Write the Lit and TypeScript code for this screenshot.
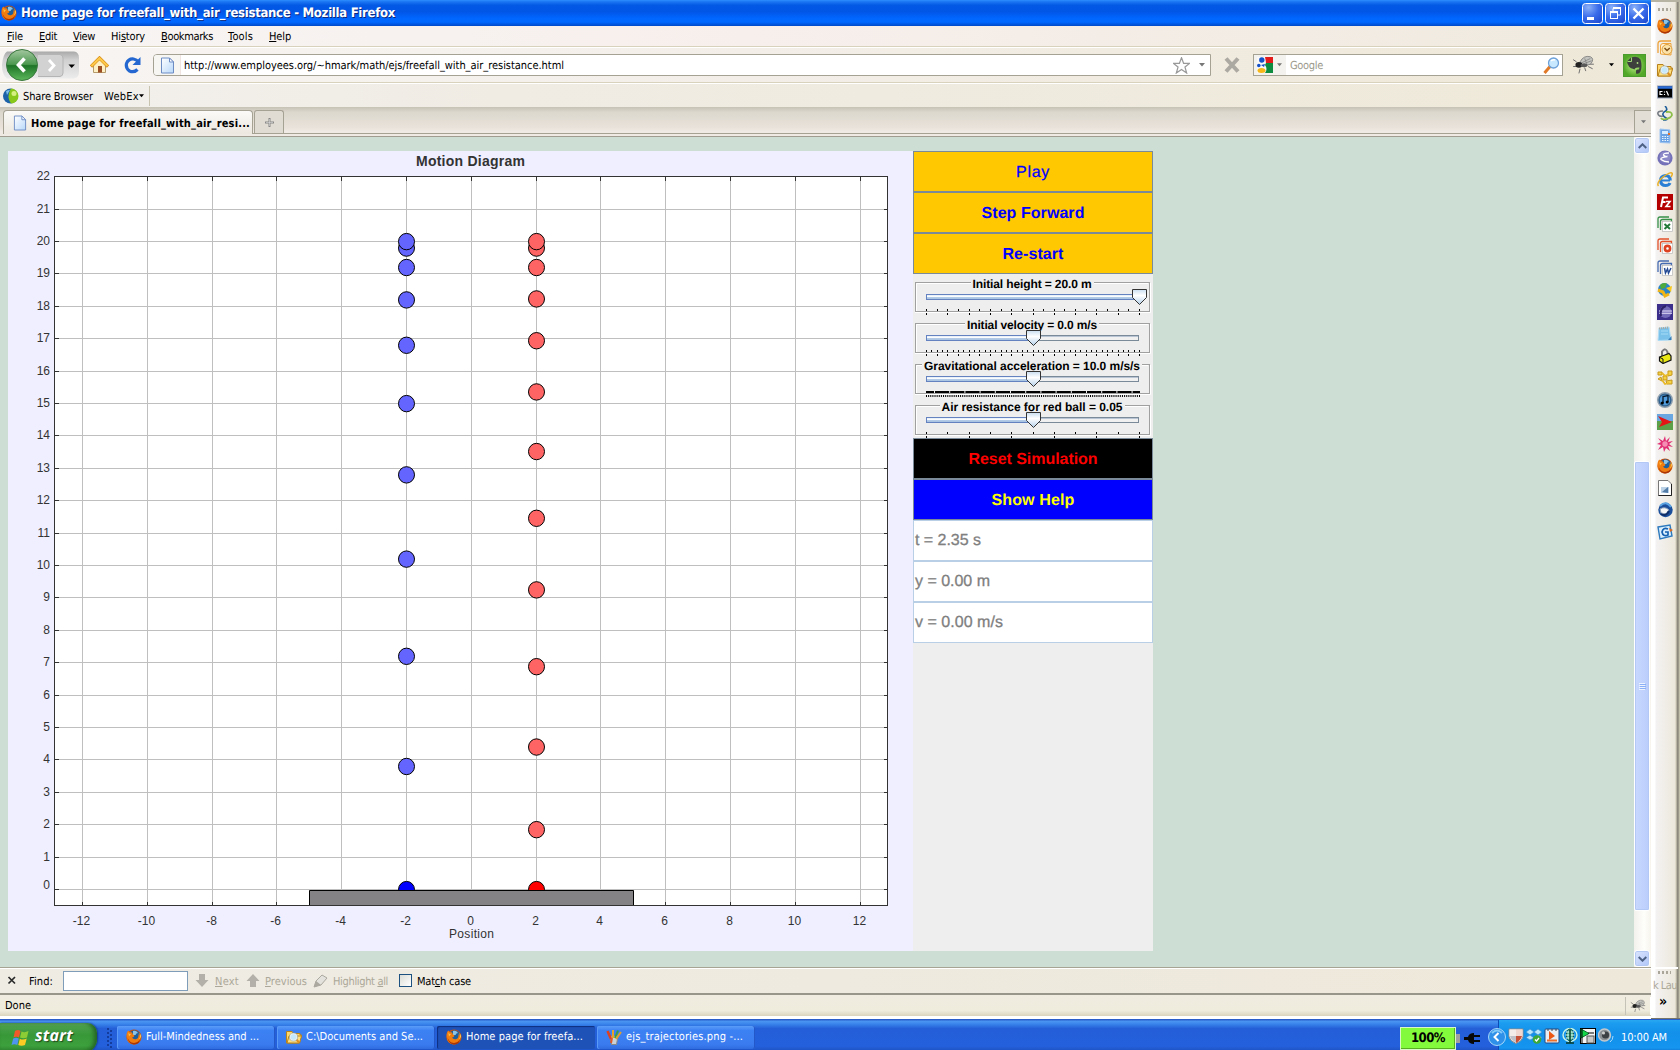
import { LitElement, html, svg, css } from "lit";
import { customElement } from "lit/decorators.js";

const UI = css`
  :host { font-family: "DejaVu Sans Condensed", "DejaVu Sans", sans-serif; font-stretch: condensed; font-size: 11px; color: #000; }
  * { box-sizing: border-box; }
  svg { display: block; flex: none; }
  .fit { display: inline-block; white-space: pre; flex: none; text-rendering: geometricPrecision; }
`;

/** Text whose tracking is adjusted so that it takes up the given width. */
const fit = (content: unknown, width: number) => html`<span class="fit" data-w=${width}>${content}</span>`;

class FitElement extends LitElement {
  firstUpdated() {
    this.renderRoot.querySelectorAll<HTMLElement>(".fit").forEach((el) => {
      const target = Number(el.dataset.w);
      const n = (el.textContent ?? "").length;
      const natural = el.getBoundingClientRect().width;
      el.style.letterSpacing = `${(target - natural) / n}px`;
    });
  }
}

const icon = (body: unknown, w = 16, h = 16, vb = "0 0 16 16") =>
  html`<svg width=${w} height=${h} viewBox=${vb}>${body}</svg>`;

const firefox = svg`
  <circle cx="8" cy="8" r="7.6" fill="#c9500c"/>
  <circle cx="8.6" cy="6.6" r="5.4" fill="#1c5f9e"/>
  <path d="M7 2Q10 1 12 4Q10 4 9.500 6L7 6Z" fill="#8cc4e8"/>
  <path d="M.6 5Q1 2 2.500 1.400Q3 3 4.500 3.200Q7 3 6.500 5L8.500 6.500Q8 8.500 6 8.500Q7.500 11 10.500 10Q13 9 12.600 4.500Q16 8 13.500 12.500Q10 16.500 5 14.800Q0 12 .6 5Z" fill="#f07c10"/>
  <path d="M1.500 8Q2.500 13.500 8 14Q12.500 13.600 14 10Q14 15 8 15.600Q2 14.500 1.500 8Z" fill="#a83408"/>
  <path d="M13.200 4Q15 7 13 10.500Q14.800 9 14.900 7Q14.600 5 13.200 4Z" fill="#ffe060"/>
  <path d="M2.300 3.500Q3 5 5 5L3 7.500Z" fill="#ffc440"/>`;
const folderFind = svg`
  <path d="M.5 2.500H6L7.500 4.500H14V6H15.500L13.500 14H.5Z" fill="#ffd76a" stroke="#b8831c"/>
  <path d="M3 7H15.500L13.500 14H1Z" fill="#ffe080" stroke="#b8831c"/>
  <path d="M10 10L13 13.500" stroke="#e09020" stroke-width="2"/><circle cx="7.500" cy="8" r="3.400" fill="#c4e8fc" stroke="#e8f0f4" stroke-width="1.200"/><circle cx="7.500" cy="8" r="4.100" fill="none" stroke="#7f98a8" stroke-width=".5"/>`;
const page = svg`<path d="M1.500 .5H9.500L13.500 4.500V15.500H1.500Z" fill="url(#pg)" stroke="#6d8cc4"/><path d="M9.500 .5V4.500H13.500Z" fill="#fff" stroke="#6d8cc4"/>
  <defs><linearGradient id="pg" x2="1" y2="1"><stop stop-color="#fff"/><stop offset="1" stop-color="#b8d8fa"/></linearGradient></defs>`;
const fly = svg`
  <path d="M4 6L1 4M5 10L1 10M7 12L6 16M11 11L12 14M14 10L18 12M15 8L19 8" stroke="#666" stroke-width=".8"/>
  <path d="M7 6Q10 0 16 1.500Q20 3.500 16 8L9 10Z" fill="#c4c4c0" stroke="#777" stroke-width=".7"/>
  <path d="M8 7L16 3M9 8L17 5M11 3L13 8" stroke="#777" stroke-width=".6"/>
  <ellipse cx="6" cy="8.500" rx="3" ry="2.500" fill="#222"/><ellipse cx="10.500" cy="9" rx="3" ry="1.700" fill="#585858"/>`;

const office = (color: string, mark: unknown) => svg`
  <path d="M1 12V3Q1 1 3 1H12" fill="none" stroke=${color} stroke-width="1.300"/><path d="M3.500 14V5.500Q3.500 3.500 5.500 3.500H14.500V6" fill="none" stroke=${color} stroke-width="1.300"/>
  <rect x="5.500" y="5.500" width="10" height="10" fill="#fff" stroke="#b8b8b8" stroke-width=".7"/>${mark}`;

const launchers: unknown[] = [
  firefox,
  svg`<path d="M1 13V4Q1 1 4 1H14" fill="none" stroke="#eda33a" stroke-width="1.300"/><path d="M3.500 14V6Q3.500 3.500 6 3.500H14V15Z" fill="#fff3d8" stroke="#eda33a"/><circle cx="10" cy="9.500" r="5" fill="#fbe2a8" stroke="#dd9d37"/><path d="M7.500 8L10 10.500L12.800 8" fill="none" stroke="#7b4c12" stroke-width="1.400"/>`,
  folderFind,
  svg`<rect x=".5" y="2" width="15" height="12" fill="#000" stroke="#98a4b8"/><path d="M1 3.500H15" stroke="#2a6cd8" stroke-width="2.500"/><path d="M5.500 7.500H3V10.500H5.500M7.500 7.500V8.500M7.500 10V11M9.500 7L11.500 11.500" fill="none" stroke="#fff" stroke-width="1.200"/>`,
  svg`<path d="M8 0Q12 4 7 6Q4 9 9 12Q12 14 6 14" fill="none" stroke="#1c5c98" stroke-width="1.600"/><path d="M6 5Q0 5 1 8Q2 11 6 10" fill="none" stroke="#777d84" stroke-width="1.600"/><path d="M9 6Q15 5 15 9Q14 12 9 13Q5 14 4 12" fill="none" stroke="#8cbd48" stroke-width="1.800"/>`,
  svg`<path d="M3 1L13 2V15L3 14.500Z" fill="#6ba2e4" stroke="#9cc4f0"/><rect x="5" y="3" width="6" height="3" fill="#d8ecff"/><rect x="11" y="5" width="2" height="2" fill="#e87020"/><path d="M5 8.500H12M5 10.500H12M5 12.500H12" stroke="#e8f4ff" stroke-dasharray="1.500 1"/>`,
  svg`<circle cx="8" cy="8" r="7.600" fill="#7471b8"/><circle cx="8" cy="7" r="5.500" fill="#8c89c8"/><path d="M12 3Q6 3 6.500 5Q8 7 10.500 6.500Q3 7.500 4 9.500Q7 12 12 12" fill="none" stroke="#fff" stroke-width="1.300"/>`,
  svg`<path d="M13 8.500H4.500" stroke="#2b80d5" stroke-width="2"/><path d="M13.300 8.500Q13 3.500 8.500 3.500Q3.500 4 3.500 8.500Q4 13.500 8.500 13.500Q12 13.500 13 11" fill="none" stroke="#2b80d5" stroke-width="3"/><path d="M1.500 14Q-1 11 6 5Q14-1 15.300 1.500Q15.500 3 14 5" fill="none" stroke="#eab026" stroke-width="1.500"/>`,
  svg`<rect width="16" height="16" fill="#b40000"/><path d="M4 13L6 3.500H11M5 8H8.500" fill="none" stroke="#fff" stroke-width="2"/><path d="M9 7.500H13L9 12.500H13.500" fill="none" stroke="#fff" stroke-width="1.600"/>`,
  office("#369048", svg`<path d="M7.500 8L13 13M13 8L7.500 13" stroke="#237a38" stroke-width="2"/>`),
  office("#e2512a", svg`<circle cx="10.500" cy="10.500" r="2.600" fill="#fff" stroke="#dd4120" stroke-width="2.600"/>`),
  office("#466bb0", svg`<path d="M7.500 8L8.500 13L10.500 9L11.500 13L14 8" fill="none" stroke="#264b94" stroke-width="1.500"/>`),
  svg`<circle cx="7.500" cy="7.500" r="6.500" fill="#2a84c8"/><path d="M3 3Q6 0 10 1.500L8 6L4 7Z" fill="#4faa3c"/><path d="M1 8L6 10L8 14L12 12" fill="none" stroke="#f0b414" stroke-width="3"/><path d="M9 6L15 4L14 10Z" fill="#f8c81c"/>`,
  svg`<rect width="16" height="16" fill="#3c2f8c"/><circle cx="8.500" cy="8" r="6" fill="#736ab8"/><path d="M2 7H15M2 9.200H15" stroke="#e6e2f8" stroke-width="1.100"/><path d="M9 2Q2.500 4 4 12" stroke="#2c2268" stroke-width="2" fill="none"/>`,
  svg`<path d="M2 2L12 1L14 14L1 14.500Z" fill="#7bc2ea" stroke="#b0dcf4"/><path d="M2 2.500L12 1.500" stroke="#a9a9a0" stroke-width="2" stroke-dasharray="1 1"/><path d="M11 14L14.500 10V14Z" fill="#3a80b8"/><path d="M4 5H11M4 8H11" stroke="#a8dcf8"/>`,
  svg`<path d="M5 8V3.500Q8.500-1 10.500 4V8" fill="none" stroke="#777" stroke-width="2"/><path d="M2.500 9L12 5.500L14 8V12L6 15.500L2.500 13Z" fill="#e9e814" stroke="#111" stroke-width="1.200"/><path d="M3 9.500L6 11V15" fill="none" stroke="#111"/>`,
  svg`<g fill="#f4d243" stroke="#c6971a"><path d="M1 2H5V5H1ZM11 1H15V5L11 6ZM6 6H10V10H6ZM1 9L4 7L5 11ZM9 11L15 10V14H10Z"/><path d="M5 3L8 6L12 4M5 10L8 14L12 13" fill="none" stroke="#e8b928" stroke-width="1.800"/></g>`,
  svg`<circle cx="8" cy="8" r="7.300" fill="#31608c" stroke="#8fa0b0" stroke-width="1.400"/><circle cx="8" cy="8" r="5.200" fill="#4f9bdb"/><path d="M6 11V4.500L11 3.500V10" fill="none" stroke="#07192c" stroke-width="1.300"/><circle cx="5.300" cy="11" r="1.500"/><circle cx="10.200" cy="10" r="1.500"/>`,
  svg`<rect width="16" height="7" fill="#6aa6e0"/><rect y="7" width="16" height="9" fill="#5da04a"/><path d="M1 2L15 8L2 13L5 8Z" fill="#e31515"/>`,
  svg`<path d="M8 0L9 5L13 1L11 6L16 5L12 8L16 11L11 10L13 15L9 12L7 16L6 11L1 14L4 9L0 8L4 6L1 2L6 5Z" fill="#e02f74"/><circle cx="8" cy="8" r="2.700" fill="#f58cb3"/>`,
  firefox,
  svg`<path d="M1.500 .5H11L14.500 4V15.500H1.500Z" fill="#fff" stroke="#777"/><path d="M14.500 4V15.500H1.500" fill="none" stroke="#222"/><rect x="4" y="7" width="8" height="6" fill="#bcd2e6"/><path d="M5 12L11 7V13Z" fill="#527ca6"/>`,
  svg`<circle cx="8.500" cy="8" r="7.200" fill="#1b4f9c"/><path d="M3 4Q9-2 14 5" fill="none" stroke="#5ca5e2" stroke-width="2"/><path d="M3 7Q8 4 12 8L9 12L4 11Z" fill="#f6f6f6" stroke="#8ca0b8"/><path d="M4 12Q9 15 12 9" stroke="#112e68" stroke-width="2" fill="none"/>`,
  svg`<path d="M1 3L13 1L15 12L3 15Z" fill="#d9efff" stroke="#2d79be" stroke-width="1.400"/><path d="M11 5Q6 3 5 8Q6 13 11 11L11 8H8" fill="none" stroke="#1560b0" stroke-width="1.700"/><path d="M12 4L16 6L13 8Z" fill="#d96820"/>`,
];

@customElement("motion-plot")
class MotionPlot extends LitElement {
  static styles = css`
    :host { display: block; width: 905px; height: 800px; background: #efefff; }
    svg { display: block; font-family: "Liberation Sans", Arial, sans-serif; font-size: 12px; fill: #333; }
    .title { font-weight: bold; font-size: 14px; }
    .balls { shape-rendering: auto; }
  `;
  private x = (v: number) => Math.round(462.8 + 32.4 * v) + 0.5;
  private y = (v: number) => Math.round(738 - 32.4 * v) + 0.5;

  render() {
    const xs = Array.from({ length: 13 }, (_, i) => -12 + 2 * i);
    const ys = Array.from({ length: 23 }, (_, i) => i);
    const blue = [3.8, 7.2, 10.2, 12.8, 15, 16.8, 18.2, 19.2, 19.8, 20];
    const red = [1.85, 4.4, 6.88, 9.25, 11.46, 13.52, 15.36, 16.94, 18.23, 19.2, 19.8, 20];
    const ball = (x: number, y: number, fill: string) =>
      svg`<ellipse cx=${this.x(x)} cy=${738.6 - 32.4 * y} rx="8" ry="8.200" fill=${fill} stroke="#000"/>`;
    return html`<svg width="905" height="800" viewBox="0 0 905 800">
      <rect x="46.500" y="25.500" width="833" height="729" fill="#fff"/>
      ${xs.map((v) => svg`<path d="M${this.x(v)} 26V754" stroke="#bfbfbf"/><path d="M${this.x(v)} 26V30M${this.x(v)} 751V755" stroke="#333"/>
        <text x=${this.x(v) - 1} y="774" text-anchor="middle">${v}</text>`)}
      ${ys.map((v) => svg`<path d="M47 ${this.y(v)}H879" stroke="#bfbfbf"/><path d="M46 ${this.y(v)}H51M876 ${this.y(v)}H880" stroke="#333"/>
        <text x="42" y=${this.y(v) + (v === 0 ? -0.5 : 3.500)} text-anchor="end">${v}</text>`)}
      <rect x="46.500" y="25.500" width="833" height="729" fill="none" stroke="#333"/>
      <g class="balls">
        ${blue.map((v) => ball(-2, v, "#6464ff"))} ${red.map((v) => ball(2, v, "#ff6464"))}
        ${ball(-2, 0, "#0000ff")} ${ball(2, 0, "#ff0000")}
      </g>
      <path d="M301.500 755V739.500H625.500V755" fill="#848284" stroke="#000"/>
      <path d="M301 754.500H626" stroke="#333"/>
      <text class="title" x="408" y="15" textLength="109">Motion Diagram</text>
      <text x="463.500" y="787" text-anchor="middle" textLength="45">Position</text>
    </svg>`;
  }
}

interface Slider { title: string; w: number; value: number; upper: number; lower: number; }

@customElement("sim-controls")
class SimControls extends FitElement {
  static styles = [UI, css`
    :host { display: flex; flex-direction: column; width: 240px; height: 800px; background: #eee; font-family: "Liberation Sans", Arial, sans-serif; }
    .btn { height: 41px; border: 1px solid #7a8a99; display: flex; align-items: center; justify-content: center; font-size: 16px; font-weight: bold; padding-top: 2px; }
    .gold { background: #ffc800; color: #00f; }
    .light { font-weight: normal; -webkit-text-stroke: .25px; }
    .reset { background: #000; color: #f00; }
    .help { background: #00f; color: #ff0; }
    .field { height: 41px; border: 1px solid #b8cfe5; background: #fff; color: #808080; font-size: 16px; display: flex; align-items: center; padding: 0 0 0 1px; -webkit-text-stroke: .3px; }
    .slider { height: 41px; display: grid; grid-template: 41px / 240px; justify-items: center; }
    .slider > * { grid-area: 1 / 1; }
    .caption { font-size: 12px; font-weight: bold; line-height: 14px; height: 14px; margin: 3px 2px 0 0; background: #eee; padding: 0 2px; color: #000; }
    .thumb { z-index: 1; }
  `];
  private sliders: Slider[] = [
    { title: "Initial height = 20.0 m", w: 119, value: 1, upper: 20, lower: 10 },
    { title: "Initial velocity = 0.0 m/s", w: 130, value: 0.5, upper: 40, lower: 20 },
    { title: "Gravitational acceleration = 10.0 m/s/s", w: 216, value: 0.5, upper: 0, lower: 100 },
    { title: "Air resistance for red ball = 0.05", w: 181, value: 0.5, upper: 10, lower: 5 },
  ];
  private ticks(n: number, y: number) {
    return Array.from({ length: n + 1 }, (_, i) => svg`<rect x=${Math.round(13 + (213 * i) / n)} y=${y} width="1" height="2"/>`);
  }
  private slider(s: Slider) {
    const x = s.value === 1 ? 226.5 : 120.5;
    return html`<div class="slider">
      <svg width="240" height="41">
        <path d="M3.500 37V9.500H235" fill="none" stroke="#fff"/>
        <rect x="2.500" y="8.500" width="234" height="29" fill="none" stroke="#a0a0a0"/>
        <path d="M2 38.500H237.500V9" fill="none" stroke="#fff"/>
        ${s.upper ? this.ticks(s.upper, 35) : svg`<path d="M13 36H21M22 36H227" stroke="#000" stroke-width="2" stroke-dasharray="14.200 1"/>`}
        ${s.lower === 100
          ? svg`<path d="M13 40H227" stroke="#000" stroke-width="2" stroke-dasharray="1 1.130"/>`
          : this.ticks(s.lower, 39)}
      </svg>
      <div class="caption">${fit(s.title, s.w)}</div>
      <svg class="thumb" width="240" height="41">
        <defs>
          <linearGradient id="t" x2="0" y2="1"><stop stop-color="#d8e6f4"/><stop offset=".45" stop-color="#fff"/><stop offset=".55" stop-color="#b4cce8"/><stop offset="1" stop-color="#a3c0de"/></linearGradient>
          <linearGradient id="k" x2="0" y2="1"><stop stop-color="#c8ddf0"/><stop offset=".4" stop-color="#fff"/><stop offset="1" stop-color="#b4d0ea"/></linearGradient>
        </defs>
        <rect x="13.500" y="20.500" width="212" height="5" fill="#f0f0f0" stroke="#7a8a99"/>
        <path d="M14 21.500H225" stroke="#b8c4d4"/>
        <rect x="13.500" y="20.500" width=${x - 14} height="5" fill="url(#t)" stroke="#6382bf"/>
        <path d="M${x - 7} 15.500H${x + 7}V23.500L${x} 30.500L${x - 7} 23.500Z" fill="url(#k)" stroke="#333"/>
      </svg>
    </div>`;
  }
  render() {
    return html`
      <div class="btn gold light">${fit("Play", 34)}</div>
      <div class="btn gold">${fit("Step Forward", 103)}</div>
      <div class="btn gold">${fit("Re-start", 61)}</div>
      ${this.sliders.map((s) => this.slider(s))}
      <div class="btn reset">${fit("Reset Simulation", 129)}</div>
      <div class="btn help">${fit("Show Help", 83)}</div>
      <div class="field">${fit("t = 2.35 s", 66)}</div>
      <div class="field">${fit("y = 0.00 m", 75)}</div>
      <div class="field">${fit("v = 0.00 m/s", 88)}</div>`;
  }
}

@customElement("browser-window")
class BrowserWindow extends FitElement {
  static styles = [UI, css`
    :host { display: flex; flex-direction: column; width: 1651px; height: 1016px; background: #eeeadf; }
    .title { height: 26px; display: flex; align-items: center; padding: 0 2px 0 1px; gap: 4px; color: #fff; font: bold 13px "DejaVu Sans Condensed", sans-serif; text-shadow: 1px 1px 0 #0b2a80;
      background: linear-gradient(#2f8dff 0, #1c78f4 6%, #0358e4 20%, #0256e6 45%, #0066ff 70%, #0068ff 85%, #0049c8 100%); }
    .grow { flex: 1; }
    .wins { display: flex; gap: 2px; }
    .menu { height: 21px; display: flex; align-items: center; padding-left: 7px; border-bottom: 1px solid #d8d2bd; background: linear-gradient(90deg, #f7f5f4, #f7efec 45%, #efeadf); }
    .menu .item { display: flex; }
    u { text-underline-offset: 1px; }
    .nav { height: 36px; display: flex; align-items: center; border-top: 1px solid #fff; border-bottom: 1px solid #d8d2bd; background: linear-gradient(90deg, #f8f5f3, #f3eee8 45%, #eee8d8); }
    .home { margin-left: 10px; }
    .url { margin-left: 8px; width: 1058px; height: 22px; border: 1px solid #a5a193; border-radius: 4px 0 0 4px; background: #fff; display: flex; align-items: center; }
    .ident { width: 27px; height: 20px; display: flex; align-items: center; padding-left: 6px; background: #f8f6f3; border-right: 1px solid #f0e4e0; margin-right: 3px; border-radius: 3px 0 0 3px; }
    .search { margin-left: 12px; width: 310px; height: 22px; border: 1px solid #a5a193; background: #fff; display: flex; align-items: center; color: #9c9a8c; }
    .engine { width: 32px; height: 20px; background: #f4f2ee; display: flex; align-items: center; gap: 4px; padding-left: 3px; margin-right: 4px; }
    .url .fit, .search .fit { padding-top: 1px; }
    .marks { height: 24px; display: flex; align-items: center; border-top: 1px solid #fff; padding: 1px 0 0 3px; background: linear-gradient(90deg, #f3f1ee, #f0ece4 30%, #eee9d8); }
    .marksep { width: 1px; height: 20px; background: #c8c4b0; margin-left: 5px; }
    .tabs { height: 30px; display: flex; align-items: flex-end; padding: 0 0 2px 3px; background: linear-gradient(#c6c2b4, #dcd8ce 18%, #e9e2da 70%, #efeae4 85%); border-bottom: 1px solid #a09c90; }
    .tab { width: 250px; height: 24px; border: 1px solid #a5a193; border-bottom: 0; border-radius: 4px 4px 0 0; background: linear-gradient(#fbfaf8, #ece8e0); display: flex; align-items: center; padding: 1px 0 0 9px; gap: 4px; font-weight: bold; }
    .strip { flex: 1; height: 24px; border-bottom: 1px solid #a5a193; display: flex; align-items: flex-end; }
    .plus { width: 30px; height: 23px; margin-left: 1px; border: 1px solid #a5a193; border-bottom: 0; border-radius: 3px 3px 0 0; background: #e0dcd3; display: flex; align-items: center; justify-content: center; }
    .all { width: 17px; height: 23px; border: 1px solid #a5a193; border-width: 1px 0 0 1px; background: #e2ded5; display: flex; align-items: center; justify-content: center; }
    .view { flex: 1; min-height: 0; display: flex; background: #cddfd5; }
    .applet { display: flex; flex: 1; padding: 14px 0 0 8px; }
    .bar { width: 17px; background: linear-gradient(90deg, #f3f1ec, #fefefb 60%, #f6f4ec); display: flex; flex-direction: column; padding: 0 1px 0 0; }
    .sbtn { height: 17px; border: 1px solid #fff; border-radius: 3px; background: linear-gradient(135deg, #dbe5fe, #b0c6f8); display: flex; align-items: center; justify-content: center; box-shadow: inset 0 0 0 1px #b4c8f4; }
    .space { height: 307px; }
    .sthumb { height: 450px; border: 1px solid #fff; border-radius: 2px; background: linear-gradient(90deg, #c8d8fe, #bacdfb); box-shadow: inset 0 0 0 1px #b4c8f6; display: flex; align-items: center; justify-content: center; }
    .find { height: 28px; border-top: 1px solid #a8a494; border-bottom: 2px solid #98958a; box-shadow: inset 0 1px #fff; display: flex; align-items: center; background: linear-gradient(90deg, #efece4, #eee8da); }
    .find .fit { padding-top: 2px; }
    .input { width: 125px; height: 20px; border: 1px solid #7f9db9; background: #fff; margin-left: 10px; }
    .dim { color: #aca899; }
    .check { width: 13px; height: 13px; border: 1px solid #1c5180; background: linear-gradient(135deg, #dcdcd7, #fff); }
    .status { height: 21px; display: flex; align-items: center; padding-left: 5px; background: linear-gradient(#f0ecdf, #efebdd 75%, #d9d4bd); }
    .cell { width: 26px; height: 18px; border-left: 1px solid #c5c2b8; border-right: 1px solid #fff; display: flex; align-items: center; justify-content: center; }
  `];
  private tri = (c: string, w = 6) => icon(svg`<path d="M0 0H6L3 3.500Z" fill=${c}/>`, w, 4, "0 0 6 4");
  private win = (red: boolean, body: unknown) => icon(svg`
    <defs><radialGradient id="g" cx=".3" cy=".2" r="1"><stop stop-color=${red ? "#f09a80" : "#8ab0f8"}/><stop offset=".5" stop-color=${red ? "#e2502c" : "#3a6cea"}/><stop offset="1" stop-color=${red ? "#c4320e" : "#1c48d0"}/></radialGradient></defs>
    <rect x=".5" y=".5" width="20" height="20" rx="3" fill="url(#g)" stroke="#fff"/>${body}`, 21, 21, "0 0 21 21");

  render() {
    const menu: [string, string, string, number, number][] = [
      ["", "F", "ile", 16, 16], ["", "E", "dit", 18, 16], ["", "V", "iew", 22, 16], ["Hi", "s", "tory", 34, 16],
      ["", "B", "ookmarks", 52, 15], ["", "T", "ools", 25, 16], ["", "H", "elp", 22, 0],
    ];
    return html`
      <div class="title">
        ${icon(firefox)} ${fit("Home page for freefall_with_air_resistance - Mozilla Firefox", 374)}
        <div class="grow"></div>
        <div class="wins">
          ${this.win(false, svg`<rect x="5" y="14" width="7" height="3" fill="#fff"/>`)}
          ${this.win(false, svg`<path d="M8 8V5.500H15.500V12H13" fill="none" stroke="#fff" stroke-width="1"/><path d="M8 5H16" stroke="#fff" stroke-width="2"/><rect x="5.500" y="9.500" width="7" height="6" fill="none" stroke="#fff"/><path d="M5 9H13" stroke="#fff" stroke-width="2"/>`)}
          ${this.win(true, svg`<path d="M5.500 5.500L15.500 15.500M15.500 5.500L5.500 15.500" stroke="#fff" stroke-width="2.400"/>`)}
        </div>
      </div>
      <div class="menu">${menu.map(([a, k, b, w, gap]) => html`<div class="item" style="margin-right:${gap}px">${fit(html`${a}<u>${k}</u>${b}`, w)}</div>`)}</div>
      <div class="nav">
        ${icon(svg`
          <defs>
            <linearGradient id="kh" x2="0" y2="1"><stop stop-color="#a9a9a9"/><stop offset=".3" stop-color="#cfcfcf"/><stop offset="1" stop-color="#ececec"/></linearGradient>
            <linearGradient id="bk" x2="0" y2="1"><stop stop-color="#a4c8a0"/><stop offset=".48" stop-color="#4c9850"/><stop offset=".52" stop-color="#1e7427"/><stop offset="1" stop-color="#5cb85c"/></linearGradient>
          </defs>
          <path d="M7 3.500H74Q79 4 79 10V24Q79 30 73 30.500H7Q2 27 2 17Q3 6 7 3.500Z" fill="url(#kh)"/>
          <path d="M38 6.500H60Q63 7 63 10V25Q63 28 60 28.500H38" fill="#d2d2d2" stroke="#b4b4b4"/>
          <path d="M49 12L54 17.500L49 23" fill="none" stroke="#fff" stroke-width="2.800"/>
          <path d="M68.500 16.500H75L71.700 20Z" fill="#000"/>
          <circle cx="22" cy="17" r="15.500" fill="url(#bk)" stroke="#3c7840"/>
          <path d="M24.500 10.500L18.500 17L24.500 23.500" fill="none" stroke="#fff" stroke-width="3.600"/>`, 80, 34, "0 0 80 34")}
        <div class="home">${icon(svg`<path d="M3.500 9V16.500H15.500V9L9.500 3.500Z" fill="#fdf0c4" stroke="#b59a6c"/><rect x="8" y="10" width="4" height="6.500" fill="#9c4e22"/><path d="M1 10.500L9.500 2L18 10.500" fill="none" stroke="#d98c14" stroke-width="3.200"/><path d="M1.500 10L9.500 2.200L17.500 10" fill="none" stroke="#fdc94a" stroke-width="2"/>`, 19, 18, "0 0 19 18")}</div>
        ${icon(svg`<path d="M28.500 13.500Q25 17 20.500 15Q16.500 12 17.500 7.500Q19.500 2.500 24.500 3Q27.500 3.500 29.500 6" fill="none" stroke="#2467d0" stroke-width="3.200"/><path d="M31.500 1V9H23.500Z" fill="#2467d0"/>`, 36, 18, "0 0 36 18")}
        <div class="url">
          <div class="ident">${icon(page, 15, 17, "0 0 15 16")}</div>
          ${fit("http://www.employees.org/~hmark/math/ejs/freefall_with_air_resistance.html", 380)}
          <div class="grow"></div>
          ${icon(svg`<path d="M8 .8L10 6H15.500L11.300 9.500L12.800 15L8 11.800L3.200 15L4.700 9.500L.5 6H6Z" fill="#fdfdfd" stroke="#999" stroke-width="1.200"/>`, 17, 17)}
          ${icon(svg`<path d="M9 1H15L12 4.500Z" fill="#777"/>`, 20, 6, "0 0 20 6")}
        </div>
        ${icon(svg`<path d="M15 1.500L27 14.500M27 1.500L15 14.500" stroke="#aca9a2" stroke-width="4"/>`, 30, 16, "0 0 30 16")}
        <div class="search">
          <div class="engine">
            ${icon(svg`<rect width="16" height="16" fill="#f8f8f8"/><path d="M8 0H16V6H9Q8.500 2 8 0Z" fill="#e31b1b"/><path d="M9 6H16V16H8Q11 12 8 8Z" fill="#0d8c40"/><circle cx="4.800" cy="3" r="2.700" fill="#1450c8"/><circle cx="1.800" cy="8.500" r="1.800" fill="#1450c8"/><path d="M4 8L8 7L7 10Z" fill="#1450c8"/><ellipse cx="4.500" cy="13.500" rx="4" ry="2.500" fill="#f5b818"/>`)}
            ${this.tri("#777", 5)}
          </div>
          ${fit("Google", 33)}
          <div class="grow"></div>
          ${icon(svg`<path d="M2.500 16L8 9.500" stroke="#e07a28" stroke-width="3"/><circle cx="11.500" cy="6" r="5" fill="#c8e8ff" stroke="#6ca0d8" stroke-width="1.300"/><path d="M9 4Q11 2 13 3" stroke="#fff" stroke-width="1.500" fill="none"/>`, 20, 17, "0 0 20 17")}
        </div>
        ${icon(svg`<g transform="translate(9 0) scale(1.150)">${fly}</g>`, 46, 20, "0 0 46 20")}
        ${this.tri("#000", 5)}
        ${icon(svg`<defs><radialGradient id="ev"><stop stop-color="#c0f088"/><stop offset="1" stop-color="#52a828"/></radialGradient></defs>
          <rect x="9.500" y=".5" width="22" height="22" fill="url(#ev)" stroke="#4a9c2c"/><path d="M13 7.500L17 3.500Q24 1.500 26.500 5.500Q28.500 12 26.500 17.500Q25 20.500 22 19.500V16.500Q23 15 25 15.500L25.500 13.500Q22.500 13 21 14.500Q20.500 16 19.500 15Q14 14 13 7.500Z" fill="#3d403c"/><path d="M13.500 7.500H17.500V3.500" fill="none" stroke="#a0d878"/><circle cx="23.500" cy="9" r=".9" fill="#b0e080"/>`, 34, 23, "0 0 34 23")}
      </div>
      <div class="marks">
        ${icon(svg`<circle cx="7.500" cy="8" r="7.500" fill="#1c62a8"/><path d="M8 .5A7.500 7.500 0 0 1 8 15.500Q3 9 8 .5Z" fill="#88c81c"/><path d="M3 3Q5 2 7 2L4 7Z" fill="#7cc0e8"/><ellipse cx="11" cy="5.500" rx="2.500" ry="2.500" fill="#d4f080"/>`, 20, 16, "0 0 20 16")}
        ${fit("Share Browser", 70)}<svg width="11" height="1"></svg>${fit("WebEx", 35)}${this.tri("#000", 5)}<div class="marksep"></div>
      </div>
      <div class="tabs">
        <div class="tab">${icon(page, 14, 16, "0 0 15 16")} ${fit("Home page for freefall_with_air_resi...", 219)}</div>
        <div class="strip">
          <div class="plus">${icon(svg`<path d="M4.500 0V9M0 4.500H9" stroke="#888" stroke-width="2"/><path d="M4.500 1V8M1 4.500H8" stroke="#ddd" stroke-width=".6"/>`, 9, 9, "0 0 9 9")}</div>
          <div class="grow"></div><div class="all">${this.tri("#777", 5)}</div>
        </div>
      </div>
      <div class="view">
        <div class="applet"><motion-plot></motion-plot><sim-controls></sim-controls></div>
        <div class="bar">
          <div class="sbtn">${icon(svg`<path d="M.7 5L4.500 1.300L8.300 5" fill="none" stroke="#4d6185" stroke-width="2"/>`, 9, 6, "0 0 9 6")}</div>
          <div class="space"></div>
          <div class="sthumb">${icon(svg`<path d="M0 .5H6M0 2.500H6M0 4.500H6M0 6.500H6" stroke="#eef4fe"/><path d="M1 1.500H7M1 3.500H7M1 5.500H7" stroke="#8cb0f8"/>`, 7, 7, "0 0 7 7")}</div>
          <div class="grow"></div>
          <div class="sbtn">${icon(svg`<path d="M.7 1L4.500 4.700L8.300 1" fill="none" stroke="#4d6185" stroke-width="2"/>`, 9, 6, "0 0 9 6")}</div>
        </div>
      </div>
      <div class="find">
        ${icon(svg`<path d="M8.500 1L15 7.500M15 1L8.500 7.500" stroke="#2a2a2a" stroke-width="1.700"/>`, 29, 9, "0 0 29 9")}
        ${fit("Find:", 24)}<div class="input"></div>
        ${icon(svg`<path d="M11 1H17V7H20.500L14 14L7.500 7H11Z" fill="#b2b0a8"/>`, 27, 15, "0 0 27 15")}
        <span class="dim">${fit(html`<u>N</u>ext`, 24)}</span>
        ${icon(svg`<path d="M11 14H17V8H20.500L14 1L7.500 8H11Z" fill="#b2b0a8"/>`, 26, 15, "0 0 26 15")}
        <span class="dim">${fit(html`<u>P</u>revious`, 42)}</span>
        ${icon(svg`<path d="M7 14L9 8L15 2L20 5L14 12Z" fill="#e4e2dc" stroke="#aaa89f"/><path d="M7 14L9 8L14 12Z" fill="#aaa89f"/>`, 26, 15, "0 0 26 15")}
        <span class="dim">${fit(html`Highlight <u>a</u>ll`, 55)}</span>
        <svg width="11" height="1"></svg><div class="check"></div><svg width="5" height="1"></svg>
        ${fit(html`Mat<u>c</u>h case`, 54)}
      </div>
      <div class="status">${fit("Done", 26)}<div class="grow"></div><div class="cell">${icon(fly, 16, 14, "0 0 20 17")}</div></div>`;
  }
}

@customElement("task-bar")
class TaskBar extends FitElement {
  static styles = [UI, css`
    :host { display: flex; width: 1680px; height: 34px; color: #fff; align-items: flex-end;
      background: linear-gradient(#1f4ec0 0, #4a94f0 7%, #3a86ec 14%, #245fd8 28%, #2460dc 80%, #1c4cb8 100%); }
    .start { width: 97px; height: 30px; border-radius: 0 10px 14px 0; display: flex; align-items: center; padding: 0 0 1px 11px; gap: 6px; color: #fff; font: italic bold 16px/18px "Open Sans", "DejaVu Sans Condensed", sans-serif; text-shadow: 1px 1px 1px #1b4a1b;
      background: linear-gradient(#68b268 0, #4aa04a 12%, #389838 40%, #3ca03c 75%, #2c7c2c 100%); box-shadow: inset -3px 0 4px #246424, 1px 0 2px #123a8c; }
    .start .fit { padding-bottom: 5px; }
    .grip { width: 20px; height: 30px; display: flex; align-items: center; justify-content: center; padding: 0 0 0 4px; }
    .tasks { display: flex; gap: 2px; height: 27px; flex: 1; }
    .task { width: 158px; height: 23px; border-radius: 2px; display: flex; align-items: center; padding: 0 0 0 9px; gap: 4px; background: linear-gradient(#5a9cf8, #3c81f3 20%, #3a7cf0 80%, #2f6ce0); box-shadow: inset -1px 0 #2458c8, inset 1px 0 #5b9bf8; }
    .task svg, .task .fit { margin-bottom: 2px; }
    .active { background: #1e52b7; box-shadow: inset 1px 1px 1px #0f2f80; }
    .batt { height: 23px; width: 56px; background: #84fa3c; border: 1px solid #d8f8c8; box-shadow: inset -1px -1px #58b020; color: #000; font-size: 13px; font-weight: bold; display: flex; align-items: center; justify-content: center; }
    .power { height: 30px; display: flex; align-items: center; width: 98px; }
    .nub { width: 4px; height: 9px; background: #a0a0a0; margin-right: 1px; }
    .tray { width: 182px; height: 33px; display: flex; align-items: center; border-left: 1px solid #0c4cb8; background: linear-gradient(#28a8f0 0, #1c9cf0 10%, #1290ea 40%, #1595f0 85%, #0c60c0 100%); padding-top: 3px; }
    .icons { display: flex; gap: 2px; width: 123px; margin: 0 0 2px -11px; }
    .clock { display: flex; padding-bottom: 2px; }
  `];
  render() {
    const brush = svg`<path d="M4 7H12L10.500 15.500H5.500Z" fill="#c8d0d8" stroke="#888"/><path d="M5 10L1.500 2" stroke="#e04020" stroke-width="2.500"/><path d="M7 9V1" stroke="#e8a428" stroke-width="2"/><path d="M9 9L12 1.500" stroke="#38a048" stroke-width="2"/><path d="M10 10L15 3" stroke="#e0a030" stroke-width="2"/><path d="M5 14L6 9" stroke="#e05828" stroke-width="2"/>`;
    return html`
      <div class="start">
        ${icon(svg`<path d="M4 2Q7 0 9.500 2L8 8.500Q5.500 7 2.500 8.500Z" fill="#f2582a"/><path d="M10.500 2.500Q13.500 4 17.500 2L16 8.500Q12.500 10 9 8.500Z" fill="#8ccc34"/><path d="M2.200 9.500Q5 8 7.800 9.500L6.300 16Q3.500 14.500 .5 16Z" fill="#4e94f0"/><path d="M8.800 9.700Q12 11.500 15.700 9.500L14 16Q10.500 17.500 7.300 16Z" fill="#fccc24"/>`, 18, 18, "0 0 18 18")}
        ${fit("start", 38)}
      </div>
      <div class="grip">${icon(svg`${[0, 1, 2, 3, 4].map((i) => svg`<rect x="0" y=${i * 4} width="2" height="2" fill="#143c9c"/><rect x="3" y=${i * 4 + 2} width="2" height="2" fill="#143c9c"/>`)}`, 5, 20, "0 0 5 20")}</div>
      <div class="tasks">
        <div class="task">${icon(firefox)} ${fit("Full-Mindedness and ...", 113)}</div>
        <div class="task">${icon(folderFind)} ${fit("C:\\Documents and Se...", 117)}</div>
        <div class="task active">${icon(firefox)} ${fit("Home page for freefa...", 117)}</div>
        <div class="task">${icon(brush)} ${fit("ejs_trajectories.png -...", 117)}</div>
      </div>
      <div class="power">
        <div class="batt">${fit("100%", 34)}</div><div class="nub"></div>
        ${icon(svg`<path d="M3 7H7Q8 3 13 3V5H19V7H13V10H19V12H13V14Q8 14 7 10H3Z" fill="#080808"/>`, 21, 17, "0 0 21 17")}
      </div>
      <div class="tray">
        <div class="icons">
          ${icon(svg`<circle cx="9" cy="9" r="8.500" fill="#2e90e8" stroke="#a8d8fa"/><path d="M4 5Q9 0 14 5" fill="none" stroke="#80c8f8" stroke-width="2"/><path d="M10.500 5L6.500 9L10.500 13" fill="none" stroke="#fff" stroke-width="2"/>`, 18, 18, "0 0 18 18")}
          ${icon(svg`<path d="M1 1H15V9Q14 13 8 15.500Q2 13 1 9Z" fill="#f4f0f0" stroke="#888"/><path d="M1.500 1.500H8V8H1.500Z" fill="#f4ece8"/><path d="M8 1.500H14.500V8H8Z" fill="#f0d8d0"/><path d="M2 8H8V14.500Q3 12 2 8Z" fill="#c0c0c8"/><path d="M8 8H14Q13 12 8 15Z" fill="#c85038"/>`)}
          ${icon(svg`<path d="M4 1L8 4L4 7L0 4ZM12 1L16 4L12 7L8 4ZM4 7L8 10L4 12L0 9.500ZM12 7L16 9.500L12 12L8 10Z" fill="#b8e4fc" stroke="#3c90d0" stroke-width=".7"/><circle cx="11" cy="11.500" r="4.300" fill="#3ca838"/><path d="M9 11.500L10.500 13L13 10" fill="none" stroke="#fff" stroke-width="1.300"/>`)}
          ${icon(svg`<rect x="1" y="1" width="14" height="14" rx="1" fill="#e8eef4" stroke="#234880"/><path d="M5 3L11 8L5 12Z" fill="#ec5814"/><path d="M3 12.500H13" stroke="#f07028" stroke-width="2"/><path d="M4 1V3M8 1V3M12 1V3" stroke="#345"/>`)}
          ${icon(svg`<ellipse cx="8" cy="7" rx="7" ry="6.500" fill="none" stroke="#c8f4e4" stroke-width="1.400"/><ellipse cx="8" cy="7" rx="3.500" ry="6" fill="#5cc0a0" stroke="#08483c"/><path d="M4 4H12M3.500 7H12.500M4 10H12" stroke="#e8fff4"/><path d="M8 2V15M4 15H12" stroke="#043828" stroke-width="1.500"/>`)}
          ${icon(svg`<rect x=".5" y=".5" width="15" height="15" fill="#f4f4f4" stroke="#000"/><path d="M1 1L9 5.500L1 10Z" fill="#14d848" stroke="#087028"/><path d="M2 1V15" stroke="#000"/><rect x="7" y="8" width="7" height="7" fill="#c8c8c8" stroke="#555"/><path d="M8 5H14" stroke="#000"/>`)}
          ${icon(svg`<circle cx="6.500" cy="7" r="6" fill="#8c9094" stroke="#c4c8cc" stroke-width="1.400"/><circle cx="7.500" cy="7" r="3.600" fill="#3c3f44"/><circle cx="5.500" cy="5" r="1.600" fill="#ccc"/><path d="M12 14Q15 12 15 8M10 16" stroke="#a8d8fc" fill="none"/>`)}
        </div>
        <svg width="10" height="1"></svg>
        <div class="clock">${fit("10:00 AM", 46)}</div>
      </div>`;
  }
}

@customElement("quick-launch")
class QuickLaunch extends FitElement {
  static styles = [UI, css`
    :host { display: flex; flex-direction: column; width: 29px; height: 1016px; overflow: hidden; background: linear-gradient(90deg, #fff 0, #fff 4px, #f4f2f2 5px, #ece8dc 24px, #d0cbb8 25px, #77756a 27px, #c0bda8 28px); border-top: 2px solid #b8b4a4; border-bottom: 1px solid #77756a; }
    .dots { width: 13px; height: 3px; margin: 6px 0 6px 7px; background: repeating-linear-gradient(90deg, #aaa69a 0 2px, transparent 2px 4px); flex: none; }
    .list { display: flex; flex-direction: column; gap: 6px; padding: 1px 0 0 6px; flex: 1; }
    .foot { height: 51px; border-top: 2px solid #fff; width: 27px; display: flex; flex-direction: column; }
    .foot .dots { margin: 2px 0 5px 7px; }
    .clip { padding-left: 2px; color: #aca899; line-height: 14px; margin-bottom: 2px; }
    .more { padding-left: 8px; font-weight: bold; font-size: 14px; line-height: 13px; }
  `];
  render() {
    return html`<div class="dots"></div>
      <div class="list">${launchers.map((l) => icon(l))}</div>
      <div class="foot"><div class="dots"></div><div class="clip">${fit("k Lau", 24)}</div><div class="more">»</div></div>`;
  }
}

@customElement("app-root")
class AppRoot extends LitElement {
  static styles = css`
    :host { display: block; width: 1680px; height: 1050px; overflow: hidden; }
    .top { display: flex; }
  `;
  render() {
    return html`<div class="top"><browser-window></browser-window><quick-launch></quick-launch></div><task-bar></task-bar>`;
  }
}
